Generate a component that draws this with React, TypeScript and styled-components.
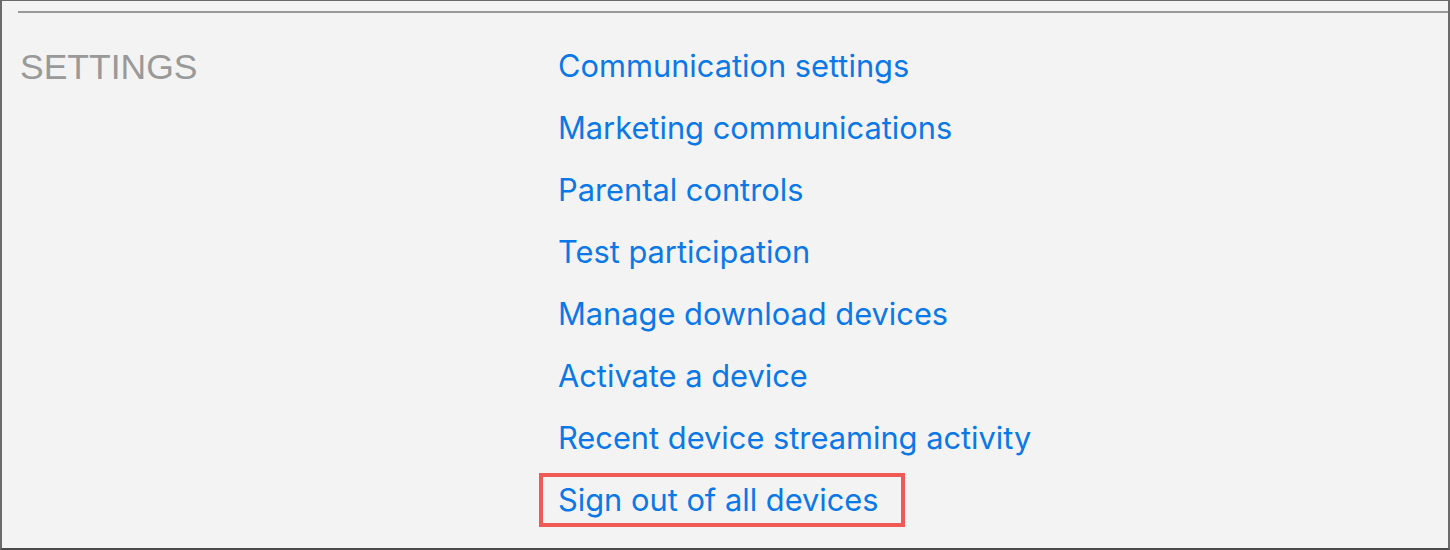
import * as React from "react";
import styled, { createGlobalStyle } from "styled-components";

const GlobalStyle = createGlobalStyle`
  html, body {
    margin: 0;
    padding: 0;
    background: #f3f3f3;
  }
`;

const Frame = styled.div`
  box-sizing: border-box;
  width: 1450px;
  height: 550px;
  background: #f3f3f3;
  border-top: 1px solid #6a6a6a;
  border-left: 2px solid #6a6a6a;
  border-right: 2px solid #6a6a6a;
  border-bottom: 2px solid #4a4a4a;
  padding-top: 10px;
  overflow: hidden;
`;

const Section = styled.section`
  margin-left: 16px;
  border-top: 2px solid #999999;
  display: grid;
  grid-template-columns: 540px 1fr;
  padding-top: 22px;
`;

const Heading = styled.h2`
  margin: 0;
  padding-top: 12px;
  padding-left: 2px;
  font-family: "Liberation Sans", Arial, sans-serif;
  font-weight: 400;
  font-size: 35.5px;
  line-height: 40px;
  color: #999999;
`;

const LinkList = styled.ul`
  list-style: none;
  margin: 0;
  padding: 0;
`;

const LinkItem = styled.li`
  height: 62px;
  display: flex;
  align-items: center;
`;

const SettingLink = styled.a<{ $highlighted?: boolean }>`
  position: relative;
  font-family: "Inter", "Noto Sans", sans-serif;
  font-size: 30.8px;
  line-height: 40px;
  color: #0a78e6;
  text-decoration: none;
  cursor: pointer;

  ${({ $highlighted }) =>
    $highlighted &&
    `
    &::after {
      content: "";
      position: absolute;
      left: -19px;
      right: -26px;
      top: -7px;
      bottom: -7px;
      border: 4px solid #f05a54;
      pointer-events: none;
    }
  `}
`;

const links = [
  "Communication settings",
  "Marketing communications",
  "Parental controls",
  "Test participation",
  "Manage download devices",
  "Activate a device",
  "Recent device streaming activity",
  "Sign out of all devices",
];

export default function App() {
  return (
    <>
      <GlobalStyle />
      <Frame>
        <Section>
          <Heading>SETTINGS</Heading>
          <LinkList>
            {links.map((label, i) => (
              <LinkItem key={label}>
                <SettingLink $highlighted={i === links.length - 1}>
                  {label}
                </SettingLink>
              </LinkItem>
            ))}
          </LinkList>
        </Section>
      </Frame>
    </>
  );
}
